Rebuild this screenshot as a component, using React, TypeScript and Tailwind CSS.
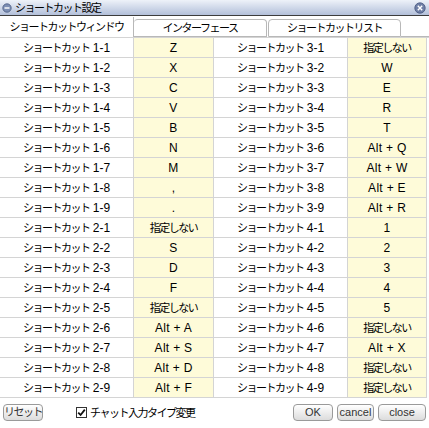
import React from "react";

const LEFT: [string, string][] = [
  ["1-1", "Z"],
  ["1-2", "X"],
  ["1-3", "C"],
  ["1-4", "V"],
  ["1-5", "B"],
  ["1-6", "N"],
  ["1-7", "M"],
  ["1-8", ","],
  ["1-9", "."],
  ["2-1", "指定しない"],
  ["2-2", "S"],
  ["2-3", "D"],
  ["2-4", "F"],
  ["2-5", "指定しない"],
  ["2-6", "Alt + A"],
  ["2-7", "Alt + S"],
  ["2-8", "Alt + D"],
  ["2-9", "Alt + F"],
];

const RIGHT: [string, string][] = [
  ["3-1", "指定しない"],
  ["3-2", "W"],
  ["3-3", "E"],
  ["3-4", "R"],
  ["3-5", "T"],
  ["3-6", "Alt + Q"],
  ["3-7", "Alt + W"],
  ["3-8", "Alt + E"],
  ["3-9", "Alt + R"],
  ["4-1", "1"],
  ["4-2", "2"],
  ["4-3", "3"],
  ["4-4", "4"],
  ["4-5", "5"],
  ["4-6", "指定しない"],
  ["4-7", "Alt + X"],
  ["4-8", "指定しない"],
  ["4-9", "指定しない"],
];

const font = { fontFamily: '"Liberation Sans", "Noto Sans CJK JP", sans-serif' };

function Jp({ children }: { children: React.ReactNode }) {
  return <span className="text-[11px] tracking-[-1.5px]">{children}</span>;
}

function KeyText({ k }: { k: string }) {
  return k === "指定しない" ? <Jp>{k}</Jp> : <span className="tracking-[0.3px]">{k}</span>;
}

function Btn({ children, w }: { children: React.ReactNode; w: string }) {
  return (
    <button
      className={`${w} h-[17px] p-0 rounded-[4px] border border-[#9a9a9a] bg-gradient-to-b from-white to-[#dcdcdc] text-[11px] leading-[15px] text-[#333] flex items-center justify-center`}
    >
      {children}
    </button>
  );
}

export default function App() {
  return (
    <div className="w-[429px] h-[428px] bg-white flex flex-col text-[12px] leading-[14px] text-black" style={font}>
      {/* title bar */}
      <div className="h-[16px] flex items-center justify-between bg-gradient-to-b from-[#eef2f9] to-[#b3c0da] border-b border-[#3c3c3c] px-[2px]">
        <div className="flex items-center gap-[3px]">
          <svg width="10" height="10" viewBox="0 0 10 10">
            <circle cx="5" cy="5" r="4.2" fill="#7d8fb4" stroke="#4a5c82" strokeWidth="0.8" />
            <rect x="2.5" y="4.3" width="5" height="1.4" fill="white" />
          </svg>
          <Jp>ショートカット設定</Jp>
        </div>
        <svg width="12" height="12" viewBox="0 0 12 12" className="mr-[1px]">
          <circle cx="6" cy="6" r="5.2" fill="#6f7fa6" stroke="#45567d" strokeWidth="0.8" />
          <path d="M3.8 3.8 L8.2 8.2 M8.2 3.8 L3.8 8.2" stroke="white" strokeWidth="1.4" />
        </svg>
      </div>

      {/* tabs */}
      <div className="h-[21px] flex items-end">
        <div className="w-[134px] h-[20px] flex items-center justify-center border-r border-[#b8b8b8] bg-white">
          <Jp>ショートカットウィンドウ</Jp>
        </div>
        <div className="w-[133px] h-[18px] flex items-center justify-center border border-[#b8b8b8] rounded-t-[4px] border-l-0">
          <Jp>インターフェース</Jp>
        </div>
        <div className="w-[133px] h-[18px] ml-[1px] flex items-center justify-center border border-[#b8b8b8] rounded-t-[4px]">
          <Jp>ショートカットリスト</Jp>
        </div>
        <div className="flex-1 h-[1px] bg-[#b8b8b8]" />
      </div>

      {/* table */}
      <div className="flex border-t border-[#d4d4d4]">
        {[LEFT, RIGHT].map((col, ci) => (
          <div key={ci} className={ci === 0 ? "w-[214px]" : "w-[213px]"}>
            {col.map(([num, key]) => (
              <div key={num} className="h-[20px] flex border-b border-[#d4d4d4]">
                <div className="w-[134px] flex items-center justify-center border-r border-[#d4d4d4] whitespace-pre">
                  <Jp>ショートカット</Jp>
                  <span> {num}</span>
                </div>
                <div className="flex-1 flex items-center justify-center bg-[#fefbd9] border-r border-[#d4d4d4] whitespace-pre">
                  <KeyText k={key} />
                </div>
              </div>
            ))}
          </div>
        ))}
      </div>

      {/* bottom bar */}
      <div className="flex-1 flex items-center px-[3px] pb-[1px]">
        <Btn w="w-[40px]">
          <Jp>リセット</Jp>
        </Btn>
        <label className="ml-[33px] flex items-center gap-[3px]">
          <span className="w-[11px] h-[11px] border border-[#333] bg-white flex items-center justify-center">
            <svg width="9" height="9" viewBox="0 0 9 9">
              <path d="M1.2 4.6 L3.6 7 L7.8 1.6" fill="none" stroke="#111" strokeWidth="1.8" />
            </svg>
          </span>
          <Jp>チャット入力タイプ変更</Jp>
        </label>
        <div className="ml-auto flex gap-[4px]">
          <Btn w="w-[40px]">OK</Btn>
          <Btn w="w-[37px]">cancel</Btn>
          <Btn w="w-[48px]">close</Btn>
        </div>
      </div>
    </div>
  );
}
